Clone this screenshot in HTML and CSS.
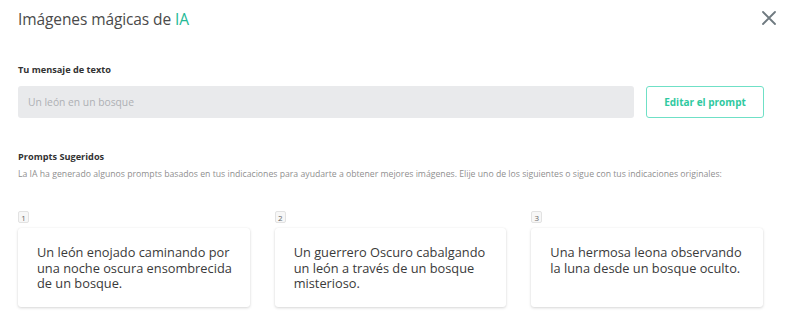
FILE: index.html
```html
<!DOCTYPE html>
<html lang="es">
<head>
<meta charset="utf-8">
<link rel="stylesheet" href="styles.css">
</head>
<body>
<div class="modal">
  <header class="head">
    <h1 class="title">Imágenes mágicas de <span class="accent">IA</span></h1>
    <button class="close" aria-label="Cerrar">
      <svg width="14" height="14" viewBox="0 0 14 14"><path d="M1 1L13 13M13 1L1 13" stroke="#6f7a80" stroke-width="1.8" stroke-linecap="round"/></svg>
    </button>
  </header>

  <section class="msg">
    <div class="label">Tu mensaje de texto</div>
    <div class="row">
      <div class="input">Un león en un bosque</div>
      <button class="btn">Editar el prompt</button>
    </div>
  </section>

  <section class="sugg">
    <div class="label">Prompts Sugeridos</div>
    <p class="desc">La IA ha generado algunos prompts basados en tus indicaciones para ayudarte a obtener mejores imágenes. Elije uno de los siguientes o sigue con tus indicaciones originales:</p>
    <div class="cards">
      <div class="item">
        <span class="num">1</span>
        <div class="card">Un león enojado caminando por una noche oscura ensombrecida de un bosque.</div>
      </div>
      <div class="item">
        <span class="num">2</span>
        <div class="card">Un guerrero Oscuro cabalgando un león a través de un bosque misterioso.</div>
      </div>
      <div class="item">
        <span class="num">3</span>
        <div class="card">Una hermosa leona observando la luna desde un bosque oculto.</div>
      </div>
    </div>
  </section>
</div>
</body>
</html>
```
FILE: styles.css
```css
* { box-sizing: border-box; }
html, body { margin: 0; padding: 0; background: #fff; }
body { font-family: "Open Sans", "Noto Sans", sans-serif; color: #444; }
.modal { width: 786px; height: 332px; padding: 0 18px 0 18px; overflow: hidden; }
.head { display: flex; justify-content: space-between; align-items: center; height: 36px; }
.title { margin: 0; font-size: 15.5px; letter-spacing: -0.1px; font-weight: 400; color: #4a4a4a; line-height: 24px; padding-top: 2px; }
.accent { color: #23b996; }
.close { border: 0; background: none; padding: 0; margin-right: -8px; width: 14px; height: 14px; display: flex; cursor: pointer; }
.msg { padding-top: 26px; }
.label { font-size: 9.2px; font-weight: 700; color: #333; line-height: 15px; }
.row { display: flex; gap: 12px; margin-top: 9px; padding-right: 4px; }
.input { flex: 1; height: 32px; background: #e9eaec; border-radius: 3px; padding: 0 10px; font-size: 10.3px; line-height: 32px; color: #aeb0b4; }
.btn { width: 118px; height: 32px; border: 1px solid #6fe0c6; border-radius: 3px; background: #fff; color: #2fc9a0; font-family: inherit; font-size: 10px; font-weight: 700; padding: 0; }
.sugg { padding-top: 31px; }
.desc { margin: 3px 0 0; font-size: 8.7px; color: #8f8f8f; line-height: 14px; white-space: nowrap; }
.cards { display: flex; gap: 25px; margin-top: 30px; padding-right: 5px; }
.item { flex: 1; display: flex; flex-direction: column; align-items: flex-start; }
.num { display: inline-block; min-width: 11px; height: 12px; padding: 0 2px; font-size: 8px; line-height: 11px; text-align: center; color: #666; background: #f7f7f7; border: 1px solid #e2e2e2; border-radius: 2px; }
.card { margin-top: 5px; align-self: stretch; height: 79px; background: #fff; border-radius: 3px; box-shadow: 0 1px 3px rgba(0,0,0,0.16), 0 0 1px rgba(0,0,0,0.08); padding: 17px 15px 0 19px; font-size: 12.8px; line-height: 15.5px; color: #3a3a3a; }
```
